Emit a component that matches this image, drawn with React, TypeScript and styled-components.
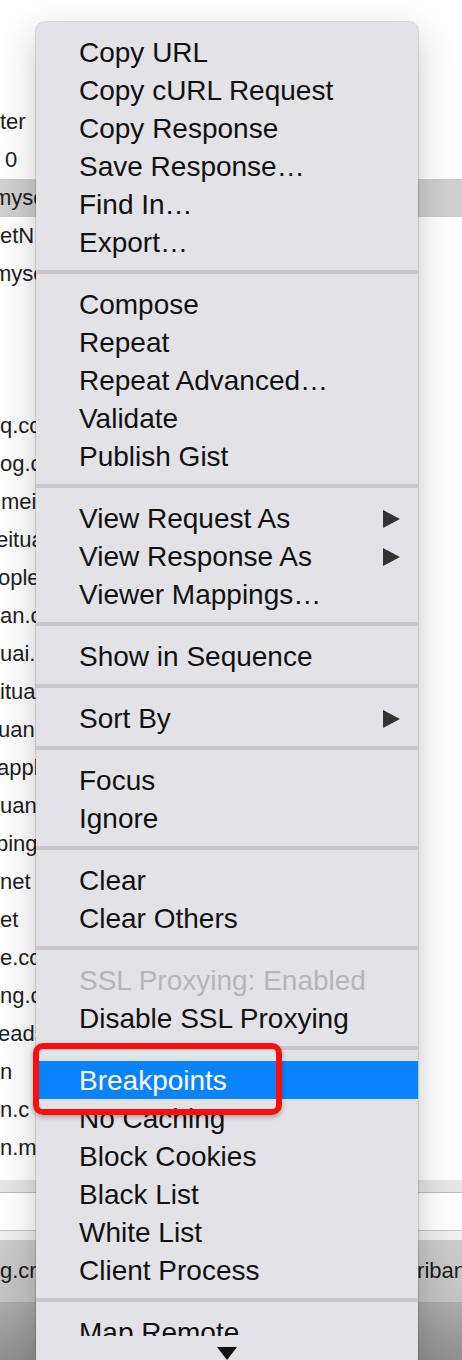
import styled, { createGlobalStyle } from "styled-components";

type MenuEntry = { label: string; submenu?: boolean; disabled?: boolean; active?: boolean };

const groups: MenuEntry[][] = [
  [
    { label: "Copy URL" },
    { label: "Copy cURL Request" },
    { label: "Copy Response" },
    { label: "Save Response…" },
    { label: "Find In…" },
    { label: "Export…" },
  ],
  [
    { label: "Compose" },
    { label: "Repeat" },
    { label: "Repeat Advanced…" },
    { label: "Validate" },
    { label: "Publish Gist" },
  ],
  [
    { label: "View Request As", submenu: true },
    { label: "View Response As", submenu: true },
    { label: "Viewer Mappings…" },
  ],
  [{ label: "Show in Sequence" }],
  [{ label: "Sort By", submenu: true }],
  [{ label: "Focus" }, { label: "Ignore" }],
  [{ label: "Clear" }, { label: "Clear Others" }],
  [{ label: "SSL Proxying: Enabled", disabled: true }, { label: "Disable SSL Proxying" }],
  [
    { label: "Breakpoints", active: true },
    { label: "No Caching" },
    { label: "Block Cookies" },
    { label: "Black List" },
    { label: "White List" },
    { label: "Client Process" },
  ],
  [{ label: "Map Remote" }],
];

// fragments of the request list peeking out left of the menu
const rows: { text: string; indent: number; selected?: boolean }[] = [
  { text: "ter", indent: 0 },
  { text: "0", indent: 5 },
  { text: "myse", indent: -7, selected: true },
  { text: "etN", indent: 0 },
  { text: "myse", indent: -7 },
  { text: "", indent: 0 },
  { text: "", indent: 0 },
  { text: "", indent: 0 },
  { text: "q.co", indent: 0 },
  { text: "og.c", indent: 0 },
  { text: "mei", indent: 1 },
  { text: "eitua", indent: -4 },
  { text: "ople", indent: -2 },
  { text: "an.c", indent: 0 },
  { text: "uai.", indent: 0 },
  { text: "ituan", indent: 0 },
  { text: "uan.", indent: -2 },
  { text: "appl", indent: -3 },
  { text: "uan.", indent: 0 },
  { text: "bing", indent: -4 },
  { text: "net", indent: 0 },
  { text: "et", indent: 0 },
  { text: "e.co", indent: 0 },
  { text: "ng.c", indent: 0 },
  { text: "eads", indent: -2 },
  { text: "n", indent: 0 },
  { text: "n.c", indent: 0 },
  { text: "n.m", indent: 0 },
  { text: "r.", indent: 0 },
];

function App() {
  return (
    <Page>
      <GlobalStyle />
      <Window>
        <Table>
          {rows.map((r, i) => (
            <Row key={i} $selected={!!r.selected} $indent={r.indent}>
              {r.text}
            </Row>
          ))}
        </Table>
        <HeaderStrip />
        <Filter />
        <Gap />
        <StatusBar>
          <span>g.cr</span>
          <span>riban</span>
        </StatusBar>
        <Toolbar />
      </Window>

      <Menu>
        <Items>
          {groups.map((g, gi) => (
            <div key={gi}>
              {gi > 0 && <Separator />}
              {g.map((e) => (
                <Item key={e.label} $active={!!e.active} $disabled={!!e.disabled}>
                  <span>{e.label}</span>
                  {e.submenu && (
                    <svg width="17" height="18" viewBox="0 0 17 18">
                      <polygon points="0,0 17,9 0,18" fill="#333" />
                    </svg>
                  )}
                </Item>
              ))}
            </div>
          ))}
        </Items>
        <ScrollFooter>
          <svg width="20" height="13" viewBox="0 0 20 13">
            <polygon points="0,0 20,0 10,13" fill="#111" />
          </svg>
        </ScrollFooter>
      </Menu>

      <Callout />
    </Page>
  );
}

export default App;

const GlobalStyle = createGlobalStyle`
  html, body {
    margin: 0;
    padding: 0;
  }
  body {
    background: #fff;
    font-family: "Liberation Sans", Arial, sans-serif;
  }
`;

const Page = styled.div`
  position: relative;
  width: 462px;
  height: 1360px;
  overflow: hidden;
`;

const Window = styled.div`
  display: flex;
  flex-direction: column;
  height: 100%;
`;

const Table = styled.div`
  height: 1180px;
  padding-top: 103px;
  box-sizing: border-box;
  overflow: hidden;
  background: #fff;
`;

const Row = styled.div<{ $selected: boolean; $indent: number }>`
  height: 38px;
  line-height: 38px;
  font-size: 22px;
  color: #1e1e1e;
  white-space: nowrap;
  text-indent: ${(p) => p.$indent}px;
  background: ${(p) => (p.$selected ? "#cfcfcf" : "transparent")};
`;

const HeaderStrip = styled.div`
  height: 12px;
  background: #e5e5e5;
  border-bottom: 1px solid #bdbdbd;
`;

const Filter = styled.div`
  height: 37px;
  background: #fff;
  border-bottom: 1px solid #c4c4c4;
`;

const Gap = styled.div`
  height: 9px;
  background: #efefef;
`;

const StatusBar = styled.div`
  height: 62px;
  display: flex;
  align-items: center;
  justify-content: space-between;
  font-size: 22px;
  color: #1a1a1a;
  white-space: nowrap;
  overflow: hidden;
  background: linear-gradient(#cbcbcb, #c2c2c2);

  span:last-child {
    margin-right: -4px;
  }
`;

const Toolbar = styled.div`
  flex: 1;
  background: linear-gradient(#acacac, #8e8e8e);
`;

const Menu = styled.div`
  position: absolute;
  top: 22px;
  left: 36px;
  width: 382px;
  height: 1338px;
  display: flex;
  flex-direction: column;
  background: #e3e2e7;
  border-radius: 9px 9px 0 0;
  box-shadow: 0 0 0 1px rgba(0, 0, 0, 0.13), 0 12px 36px rgba(0, 0, 0, 0.22);
`;

const Items = styled.div`
  flex: 1;
  overflow: hidden;
  padding-top: 11px;
`;

const Item = styled.div<{ $active: boolean; $disabled: boolean }>`
  height: 38px;
  display: flex;
  align-items: center;
  justify-content: space-between;
  padding: 1px 18px 0 43px;
  box-sizing: border-box;
  font-size: 28px;
  white-space: nowrap;
  color: ${(p) => (p.$active ? "#fff" : p.$disabled ? "#b6b5ba" : "#111")};
  background: ${(p) => (p.$active ? "#0a84fe" : "transparent")};
`;

const Separator = styled.div`
  height: 4px;
  margin: 9px 0 11px;
  background: #c9c8cd;
`;

const ScrollFooter = styled.div`
  height: 24px;
  flex-shrink: 0;
  display: flex;
  justify-content: center;
  padding-top: 11px;
  box-sizing: border-box;
  overflow: hidden;
`;

const Callout = styled.div`
  position: absolute;
  left: 33px;
  top: 1043px;
  width: 249px;
  height: 72px;
  box-sizing: border-box;
  border: 6px solid #fb0d0d;
  border-radius: 10px;
  box-shadow: 0 2px 5px rgba(0, 0, 0, 0.3);
`;
